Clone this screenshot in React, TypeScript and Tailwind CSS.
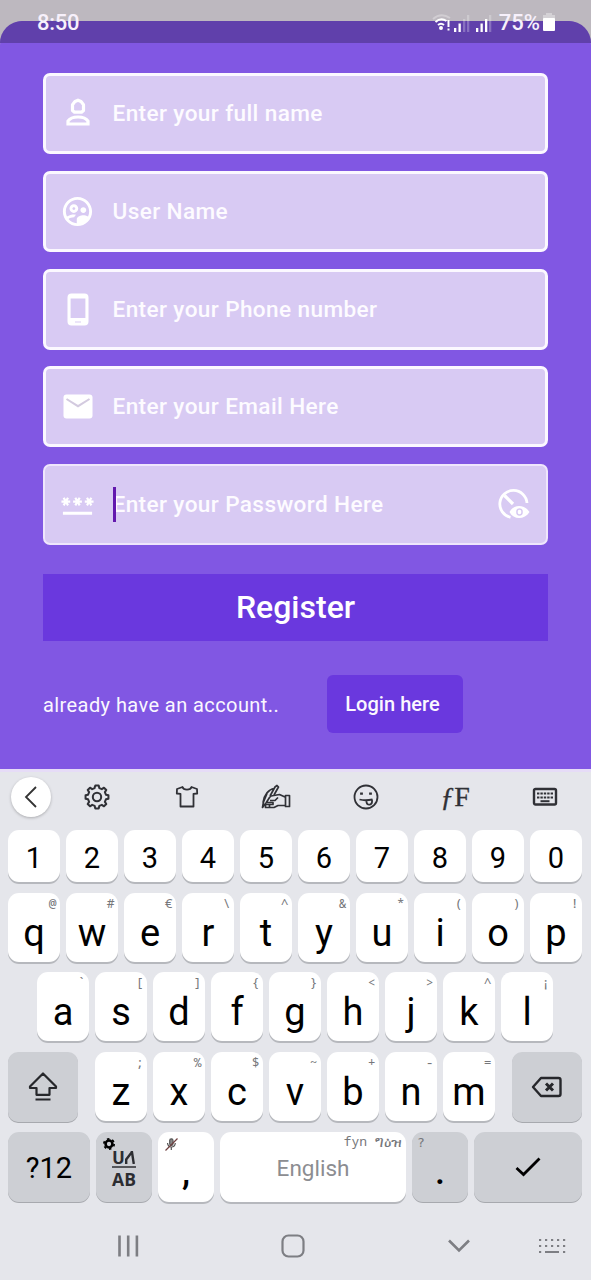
import type { ReactNode } from "react";
import { MdOutlineSupervisedUserCircle, MdPassword } from "react-icons/md";

const fields: { label: string; icon: ReactNode }[] = [
  {
    label: "Enter your full name",
    icon: (
      <svg className="mt-[-3px]" width="30" height="32" viewBox="0 0 30 32" fill="none" stroke="white" strokeWidth="3.2">
        <path d="M9.500 14.500V8.700L12 5.400L15 4.200L18 5.400L20.500 8.700V14.500L18.500 16.200H11.500Z" strokeLinejoin="round" />
        <path d="M5 28V25.200C7 22 11 21 15 21S23 22 25 25.200V28Z" />
      </svg>
    ),
  },
  { label: "User Name", icon: <MdOutlineSupervisedUserCircle size={35} color="white" /> },
  {
    label: "Enter your Phone number",
    icon: (
      <svg width="30" height="34" viewBox="0 0 30 34">
        <path fillRule="evenodd" fill="white" d="M8.500 1.500H21.500Q25.500 1.500 25.500 5.500V29.500Q25.500 33.500 21.500 33.500H8.500Q4.500 33.500 4.500 29.500V5.500Q4.500 1.500 8.500 1.500ZM7.600 6.500V26H22.400V6.500ZM12 29.500V30.600H18V29.500Z" />
      </svg>
    ),
  },
  {
    label: "Enter your Email Here",
    icon: (
      <svg className="mt-[-1px]" width="30" height="30" viewBox="0 0 30 30">
        <rect x="0.500" y="3.500" width="29" height="24" rx="3" fill="white" />
        <path d="M3.500 8L15 15.200L26.500 8" fill="none" stroke="#d3cadf" strokeWidth="2" />
      </svg>
    ),
  },
];

function Field({ label, icon, active = false }: { label: string; icon: ReactNode; active?: boolean }) {
  return (
    <div
      className={
        active
          ? "flex h-[81px] items-center rounded-[7px] border-2 border-[#efe6fc] bg-[#d8caf3] pl-[1px]"
          : "flex h-[81px] items-center rounded-[7px] border-[3px] border-[#fbf8ff] bg-[#d8caf3]"
      }
    >
      <div className="flex w-[63px] shrink-0 items-center justify-center">{icon}</div>
      <span className="relative mt-[1px] ml-[3.500px] flex-1 text-[22.600px] leading-7 font-medium tracking-[0.380px] text-[#fdfbff]">
        {label}
        {active && <span className="absolute top-[-4px] left-0 h-[35px] w-[3px] bg-[#6318ae]" />}
      </span>
      {active && (
        <svg className="mr-[15px]" width="34" height="34" viewBox="0 0 34 34" fill="none" stroke="white">
          <path d="M13.500 30.300A13.600 13.600 0 1 1 30 16" strokeWidth="2.800" />
          <path d="M7.500 8.500L16 17" strokeWidth="3.200" />
          <path d="M12.500 25C16.500 17 27.500 17 32.500 25C27.500 33 16.500 33 12.500 25Z" fill="white" stroke="none" />
          <ellipse cx="22.500" cy="25" rx="2.600" ry="3" stroke="#d8caf3" strokeWidth="1.500" />
        </svg>
      )}
    </div>
  );
}

function Key({ label, hint }: { label: string; hint: string }) {
  return (
    <div className="relative flex h-[69px] w-[52px] items-center justify-center rounded-[11px] bg-white pt-[11px] text-[38px] leading-none text-black shadow-[0_2px_0_#b6b8bd]">
      {label}
      <span className="absolute top-[2px] right-[3.500px] font-['Noto_Sans_Mono','DejaVu_Sans_Mono',monospace] text-[13px] leading-4 text-[#76777b]">
        {hint}
      </span>
    </div>
  );
}

function Bars({ className, lit }: { className: string; lit: number }) {
  return (
    <svg className={className} width="16" height="17" viewBox="0 0 16 17" fill="white">
      <rect x="0" y="13" width="2.300" height="4" />
      <rect x="4.500" y="8.500" width="2.300" height="8.500" />
      <rect x="9" y="4" width="2.300" height="13" opacity={lit > 2 ? 1 : 0.25} />
      <rect x="13" y="0" width="2.300" height="17" opacity="0.250" />
    </svg>
  );
}

const digits = ["1", "2", "3", "4", "5", "6", "7", "8", "9", "0"];
const rowOne = [["q", "@"], ["w", "#"], ["e", "€"], ["r", "\\"], ["t", "^"], ["y", "&"], ["u", "*"], ["i", "("], ["o", ")"], ["p", "!"]];
const rowTwo = [["a", "`"], ["s", "["], ["d", "]"], ["f", "{"], ["g", "}"], ["h", "<"], ["j", ">"], ["k", "^"], ["l", "¡"]];
const rowThree = [["z", ";"], ["x", "%"], ["c", "$"], ["v", "~"], ["b", "+"], ["n", "-"], ["m", "="]];

export default function App() {
  return (
    <div className="flex h-[1280px] w-[591px] flex-col overflow-hidden bg-[#bdb8bf] font-[Roboto,sans-serif]">
      <div className="flex h-[769px] flex-col bg-[#bdb8bf] pt-[21px]">
        <div className="flex-1 overflow-visible rounded-t-[24px] bg-[#8157e3]">
          <header className="relative h-[22px] rounded-t-[24px] bg-[#6040ab]">
            <div className="absolute top-[-12px] right-[36px] left-[37px] flex h-[26px] items-center text-[22px] font-medium text-[#f7f0fb]">
              <span className="flex-1 tracking-[-0.300px]">8:50</span>
              <svg width="20" height="17" viewBox="0 0 20 17" fill="none" stroke="white" strokeWidth="2">
                <path d="M1 5Q9 -2 18 4" opacity="0.300" />
                <path d="M3.500 8Q9 3 14.500 7M6 11Q9 8.500 12 11" />
                <circle cx="9" cy="14" r="1" fill="white" />
                <path d="M16.500 6V13M16.500 14.500V16.500" />
              </svg>
              <Bars className="mt-[2px] ml-[2px]" lit={2} />
              <Bars className="mt-[2px] ml-[6px]" lit={3} />
              <span className="ml-[7px]">75%</span>
              <svg className="ml-[3px]" width="12" height="18" viewBox="0 0 12 18" fill="white">
                <path d="M3 0H9V2H12V6H0V2H3Z" opacity="0.350" />
                <rect y="5" width="12" height="13" rx="1" />
              </svg>
            </div>
          </header>
          <main className="px-[43px] pt-[30.400px]">
            <div className="flex flex-col gap-[16.600px]">
              {fields.map((f) => (
                <Field key={f.label} label={f.label} icon={f.icon} />
              ))}
              <Field active label="Enter your Password Here" icon={<MdPassword size={35} color="white" />} />
            </div>
            <button className="mt-[29px] flex h-[67px] w-full items-center justify-center bg-[#6a38de] text-[32px] font-medium text-white">
              Register
            </button>
            <div className="mt-[34.400px] flex items-center text-[20px] text-[#faf7ff]">
              <span className="w-[284px] pt-[1px] tracking-[0.420px]">already have an account..</span>
              <button className="h-[58px] w-[136px] rounded-[6px] bg-[#6a38de] pr-[5px] font-medium tracking-[0.050px]">Login here</button>
            </div>
          </main>
        </div>
      </div>

      <section className="flex-1 border-t-[3px] border-[#e6dcf7] bg-[#e5e6eb]">
        <div className="flex h-[58px] items-center pl-[11px] text-[#303136]">
          <div className="mt-[-9px] flex h-[40px] w-[40px] items-center justify-center rounded-full bg-white shadow-[0_1px_3px_rgba(0,0,0,0.25)]">
            <svg width="14" height="22" viewBox="0 0 14 22" fill="none" stroke="#333" strokeWidth="1.800">
              <path d="M12 1L2 11L12 21" />
            </svg>
          </div>
          <div className="mt-[-8px] grid flex-1 grid-cols-[91px_89px_90px_89px_90px_90px] items-center justify-items-center">
            <svg width="26" height="26" viewBox="0 0 28 28" fill="none" stroke="currentColor" strokeWidth="2.200" strokeLinejoin="round">
              <path d="M11.500 3.700L12.200 1.700H15.800L16.500 4.400L19.200 5.500L21.500 4L24 6.500L22.500 8.800L23.600 11.500L26.300 12.200V15.800L23.600 16.500L22.500 19.200L24 21.500L21.500 24L19.200 22.500L16.500 23.600L15.800 26.300H12.200L11.500 23.600L8.800 22.500L6.500 24L4 21.500L5.500 19.200L4.400 16.500L1.700 15.800V12.200L4.400 11.500L5.500 8.800L4 6.500L6.500 4L8.800 5.500L11.500 4.400Z" />
              <circle cx="14" cy="14" r="4.500" />
            </svg>
            <svg width="24" height="26" viewBox="0 0 24 26" fill="none" stroke="currentColor" strokeWidth="1.800" strokeLinejoin="round">
              <path d="M7.500 3L2 5L1.800 9.500L5.500 9.800V22.500H18.500V9.800L22.200 9.500L22 5L16.500 3C15.500 6.500 8.500 6.500 7.500 3Z" />
            </svg>
            <svg width="30" height="26" viewBox="0 0 30 26" fill="none" stroke="currentColor" strokeWidth="1.700" strokeLinejoin="round">
              <path d="M9 12L14 3L16 1.500L17.500 3L13 11M13 4.500C8 5 3 11 2 18.500M6 9.500L2.500 18L1.500 23.500L5 19" />
              <path d="M5 19L8.500 13.500L10 12L18.500 10.500L24 13M9 16.500H14L17 13.500M24 21.500H17L13 23.500H4.500V20.500H12V18.500H6M8.500 20.500V23.500M24.500 11.500V22.500H28.500V11.500Z" />
            </svg>
            <svg width="26" height="26" viewBox="0 0 26 26" fill="none" stroke="currentColor" strokeWidth="1.800">
              <circle cx="13" cy="13" r="11.500" />
              <path d="M6.500 15.500Q12 17 19.500 15.500M13.500 16.500V18Q14 21 17 20.500Q19.500 20 19 15.500" />
              <path d="M8.500 8.500V10.800M17.500 8.500V10.800" strokeWidth="2.800" />
            </svg>
            <span className="font-['Liberation_Serif',serif] text-[28px] leading-8 text-[#303136] [-webkit-text-stroke:0.300px]">
              <i>ƒ</i>F
            </span>
            <svg width="26" height="20" viewBox="0 0 26 20" fill="none" stroke="currentColor" strokeWidth="2.400">
              <rect x="2" y="2" width="22" height="15.500" rx="1.500" />
              <path d="M5 6.500H21M5 10.500H21" strokeDasharray="2.400 1" strokeWidth="2.200" />
              <path d="M8.500 14.200H17.500" strokeWidth="2" />
            </svg>
          </div>
        </div>

        <div className="flex flex-col gap-[10.600px] text-black">
          <div className="flex gap-[6px] pl-[8px]">
            {digits.map((d) => (
              <div key={d} className="flex h-[52px] w-[52px] items-center justify-center rounded-[11px] bg-white pt-[6px] text-[29px] shadow-[0_2px_0_#b6b8bd]">
                {d}
              </div>
            ))}
          </div>
          <div className="flex gap-[6px] pl-[8px]">
            {rowOne.map(([l, h]) => <Key key={l} label={l} hint={h} />)}
          </div>
          <div className="flex gap-[6px] pl-[37px]">
            {rowTwo.map(([l, h]) => <Key key={l} label={l} hint={h} />)}
          </div>
          <div className="flex gap-[6px] pl-[8px]">
            <div className="mr-[11px] flex h-[70px] w-[70px] items-center justify-center rounded-[10px] bg-[#cdcfd4] shadow-[0_1px_0_#a7a9ae]">
              <svg width="30" height="30" viewBox="0 0 30 30" fill="none" stroke="#26272b" strokeWidth="2.200" strokeLinejoin="round">
                <path d="M15 1.500L2 14.500V16H8.500V22.800H21.500V16H28V14.500ZM7.500 27.500H22.500" />
              </svg>
            </div>
            {rowThree.map(([l, h]) => <Key key={l} label={l} hint={h} />)}
            <div className="ml-[11px] flex h-[70px] w-[70px] items-center justify-center rounded-[10px] bg-[#cdcfd4] shadow-[0_1px_0_#a7a9ae]">
              <svg width="32" height="22" viewBox="0 0 32 22" fill="none" stroke="#26272b" strokeWidth="2.400" strokeLinejoin="round">
                <path d="M10 2H27.500Q29.500 2 29.500 4V18Q29.500 20 27.500 20H10L2 11Z" />
                <path d="M15 7.500L22 14.500M22 7.500L15 14.500" strokeWidth="3" />
              </svg>
            </div>
          </div>
          <div className="flex gap-[6px] pl-[8px]">
            <div className="flex h-[70px] w-[82px] items-center justify-center rounded-[11px] bg-[#cdcfd4] pt-[2px] text-[29px] shadow-[0_1px_0_#a7a9ae]">?12</div>
            <div className="relative flex h-[70px] w-[56px] flex-col items-center rounded-[11px] bg-[#cdcfd4] pt-[17px] text-[#2c2d31] shadow-[0_1px_0_#a7a9ae]">
              <svg className="absolute top-[6px] left-[7px]" width="12" height="12" viewBox="0 0 14 14" fill="none" stroke="black">
                <circle cx="7" cy="7" r="4" strokeWidth="3" />
                <circle cx="7" cy="7" r="6" strokeWidth="2" strokeDasharray="2.900 3.380" />
              </svg>
              <span className="flex h-[19px] w-[24px] items-center justify-center gap-[1px] border-b-2 border-[#55565a] text-[18px] leading-4 font-bold">
                <span>U</span>
                <svg width="10" height="13" viewBox="0 0 10 13" fill="none" stroke="currentColor" strokeWidth="2.400">
                  <path d="M1.200 13V8.500L6.800 1.200V0M6.800 0L8.800 13" />
                </svg>
              </span>
              <span className="mt-[1px] font-['Open_Sans',sans-serif] text-[17.500px] leading-5 font-bold">AB</span>
            </div>
            <div className="relative flex h-[70px] w-[56px] items-center justify-center rounded-[11px] bg-white pt-[9px] text-[36px] font-medium shadow-[0_2px_0_#b6b8bd]">
              ,
              <svg className="absolute top-[6px] left-[7px]" width="13" height="13" viewBox="0 0 13 13" fill="none" stroke="#555" strokeWidth="1.200">
                <rect x="4.700" y="0.800" width="3.300" height="6.500" rx="1.600" fill="#888" />
                <path d="M2.500 5Q3 9 6.300 9Q10 9 10.300 5M6.300 9V12" />
                <path d="M0.500 12.500L12.500 0.500" stroke="#704040" />
              </svg>
            </div>
            <div className="relative flex h-[70px] w-[186px] items-center justify-center rounded-[11px] bg-white pt-[2px] text-[22.500px] text-[#8c8d91] shadow-[0_2px_0_#b6b8bd]">
              English
              <span className="absolute top-[1px] right-[4px] flex items-center gap-[8px] font-['Noto_Sans_Mono','DejaVu_Sans_Mono',monospace] text-[13px] leading-4 text-[#76777b]">
                fyn
                <span className="text-[15px] leading-4">ግዕዝ</span>
              </span>
            </div>
            <div className="relative flex h-[70px] w-[56px] items-center justify-center rounded-[11px] bg-[#cdcfd4] pt-[9px] text-[36px] font-medium shadow-[0_1px_0_#a7a9ae]">
              .
              <span className="absolute top-[3px] left-[5px] font-['DejaVu_Sans_Mono',monospace] text-[13px] leading-4 font-normal text-[#76777b]">?</span>
            </div>
            <div className="flex h-[70px] w-[108px] items-center justify-center rounded-[11px] bg-[#cdcfd4] shadow-[0_1px_0_#a7a9ae]">
              <svg width="26" height="20" viewBox="0 0 26 20" fill="none" stroke="black" strokeWidth="2.800">
                <path d="M1.500 11L8.500 17.500L24.500 1.500" />
              </svg>
            </div>
          </div>
        </div>

        <nav className="mt-[32px] flex h-[24px] items-center pl-[117px] text-[#7d7e83]">
          <svg width="22" height="22" viewBox="0 0 22 22" fill="none" stroke="currentColor" strokeWidth="2.600">
            <path d="M2.500 0.500V21.500M11.200 0.500V21.500M19.900 0.500V21.500" />
          </svg>
          <svg className="ml-[142px]" width="24" height="24" viewBox="0 0 24 24" fill="none" stroke="currentColor" strokeWidth="2.200">
            <rect x="1.500" y="1.500" width="21" height="21" rx="6" />
          </svg>
          <svg className="ml-[143px]" width="22" height="14" viewBox="0 0 22 14" fill="none" stroke="currentColor" strokeWidth="2.600">
            <path d="M1 1.500L11 11.500L21 1.500" />
          </svg>
          <svg className="ml-[68px]" width="28" height="16" viewBox="0 0 28 16" fill="none" stroke="currentColor" strokeWidth="2.200">
            <path d="M1 2H28M1 8H28" strokeDasharray="2.200 3.800" />
            <path d="M1 14H3.200M7 14H21M25 14H27.200" />
          </svg>
        </nav>
      </section>
    </div>
  );
}
